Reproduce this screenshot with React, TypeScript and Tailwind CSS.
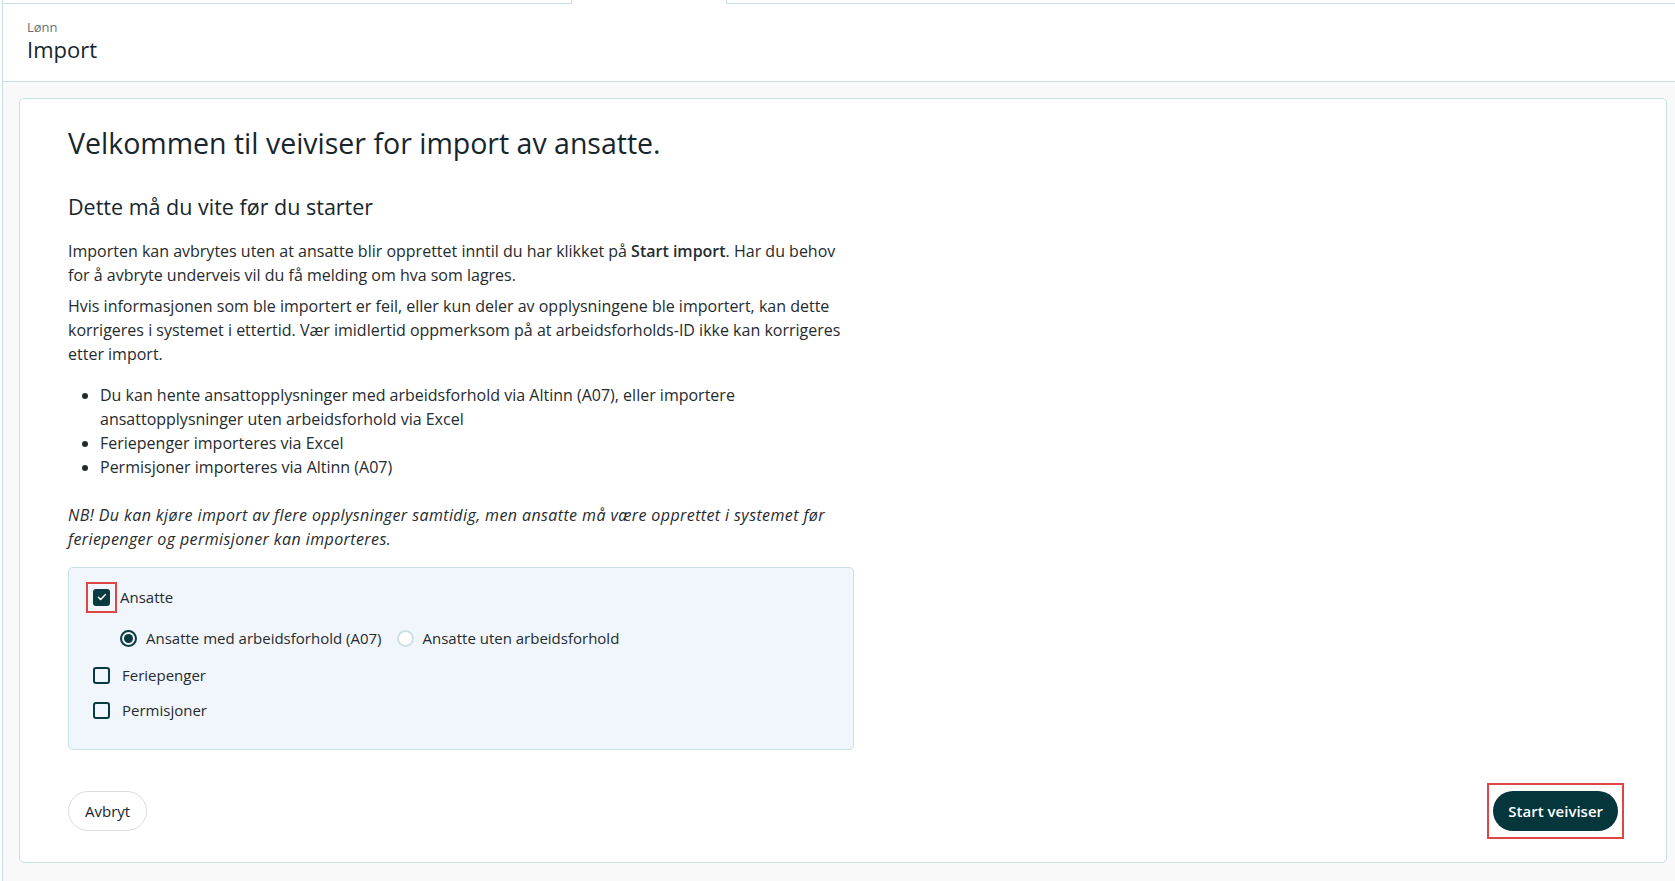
import React from "react";

function Checkbox({ checked }: { checked?: boolean }) {
  return (
    <span
      className={
        "flex h-[17px] w-[17px] shrink-0 items-center justify-center rounded-[3px] border-2 border-[#073b41] " +
        (checked ? "bg-[#073b41]" : "bg-transparent")
      }
    >
      {checked && (
        <svg viewBox="0 0 16 16" className="h-[12px] w-[12px]" fill="none">
          <path d="M3.2 8.4l3 3 6.4-6.8" stroke="#fff" strokeWidth="2" strokeLinecap="round" strokeLinejoin="round" />
        </svg>
      )}
    </span>
  );
}

function Radio({ checked }: { checked?: boolean }) {
  return checked ? (
    <span className="flex h-[17px] w-[17px] shrink-0 items-center justify-center rounded-full border-2 border-[#073b41]">
      <span className="h-[9px] w-[9px] rounded-full bg-[#073b41]" />
    </span>
  ) : (
    <span className="h-[17px] w-[17px] shrink-0 rounded-full border-2 border-[#cde1e4] bg-white" />
  );
}

export default function App() {
  return (
    <div
      className="min-h-screen bg-white pl-[2px] text-[#262b2e]"
      style={{ fontFamily: '"Open Sans", "Noto Sans", sans-serif' }}
    >
      <div className="flex min-h-screen flex-col border-l border-[#c6e1e4] bg-[#f9f9f9]">
        {/* tabs strip, mostly cut off */}
        <div className="flex h-[4px] bg-white">
          <div className="w-[569px] border-b border-r border-[#c6e1e4]" />
          <div className="w-[154px]" />
          <div className="flex-1 border-b border-l border-[#c6e1e4]" />
        </div>

        <header className="h-[78px] border-b border-[#c6e1e4] bg-white px-[24px] pt-[14px]">
          <div className="text-[13px] leading-[18px] text-[#6a6f72]">Lønn</div>
          <div className="-mt-[2px] text-[22px] leading-[30px] text-[#17262d]">Import</div>
        </header>

        <main className="ml-[16px] mr-[8px] mt-[16px] mb-[18px] rounded-[5px] border border-[#c6e1e4] bg-white px-[48px] pb-[31px] pt-[24px]">
          <h1 className="text-[28.5px] leading-[40px] text-[#17262d]">
            Velkommen til veiviser for import av ansatte.
          </h1>
          <h2 className="mt-[30px] text-[21.5px] leading-[28px] text-[#17262d]">
            Dette må du vite før du starter
          </h2>

          <div className="max-w-[788px] text-[16px] leading-[24px]">
            <p className="mt-[18px]">
              Importen kan avbrytes uten at ansatte blir opprettet inntil du har klikket på{" "}
              <span className="font-semibold">Start import</span>. Har du behov for å avbryte underveis vil du få
              melding om hva som lagres.
            </p>
            <p className="mt-[7px]">
              Hvis informasjonen som ble importert er feil, eller kun deler av opplysningene ble importert, kan dette
              korrigeres i systemet i ettertid. Vær imidlertid oppmerksom på at arbeidsforholds-ID ikke kan korrigeres
              etter import.
            </p>
            <ul className="mt-[17px] list-disc pl-[32px]">
              <li>
                Du kan hente ansattopplysninger med arbeidsforhold via Altinn (A07), eller importere
                ansattopplysninger uten arbeidsforhold via Excel
              </li>
              <li>Feriepenger importeres via Excel</li>
              <li>Permisjoner importeres via Altinn (A07)</li>
            </ul>
            <p className="mt-[24px] italic tracking-[0.4px]">
              NB! Du kan kjøre import av flere opplysninger samtidig, men ansatte må være opprettet i systemet før
              feriepenger og permisjoner kan importeres.
            </p>
          </div>

          <div className="mt-[16px] w-[786px] rounded-[5px] border border-[#c9dfe3] bg-[#f1f6fc] px-[24px] pb-[26px] pt-[16px] text-[15px]">
            <label className="flex h-[26px] items-center gap-[10px]">
              <span className="-m-[7px] border-2 border-[#e04545] p-[5px]">
                <Checkbox checked />
              </span>
              <span>Ansatte</span>
            </label>
            <div className="mt-[15px] flex h-[26px] items-center pl-[27px]">
              <label className="flex items-center gap-[9px]">
                <Radio checked />
                <span>Ansatte med arbeidsforhold (A07)</span>
              </label>
              <label className="ml-[15px] flex items-center gap-[9px]">
                <Radio />
                <span>Ansatte uten arbeidsforhold</span>
              </label>
            </div>
            <label className="mt-[11px] flex h-[26px] items-center gap-[12px]">
              <Checkbox />
              <span>Feriepenger</span>
            </label>
            <label className="mt-[9px] flex h-[26px] items-center gap-[12px]">
              <Checkbox />
              <span>Permisjoner</span>
            </label>
          </div>

          <div className="mt-[41px] flex items-center justify-between">
            <button className="h-[40px] rounded-full border border-[#dcdcdc] bg-white px-[16px] text-[15px] text-[#17262d]">
              Avbryt
            </button>
            <span className="-mx-[6px] -my-[8px] border-2 border-[#e04545] px-[4px] py-[6px]">
              <button className="block h-[40px] rounded-full bg-[#04363c] px-[15px] text-[15px] font-semibold text-white">
                Start veiviser
              </button>
            </span>
          </div>
        </main>
      </div>
    </div>
  );
}
